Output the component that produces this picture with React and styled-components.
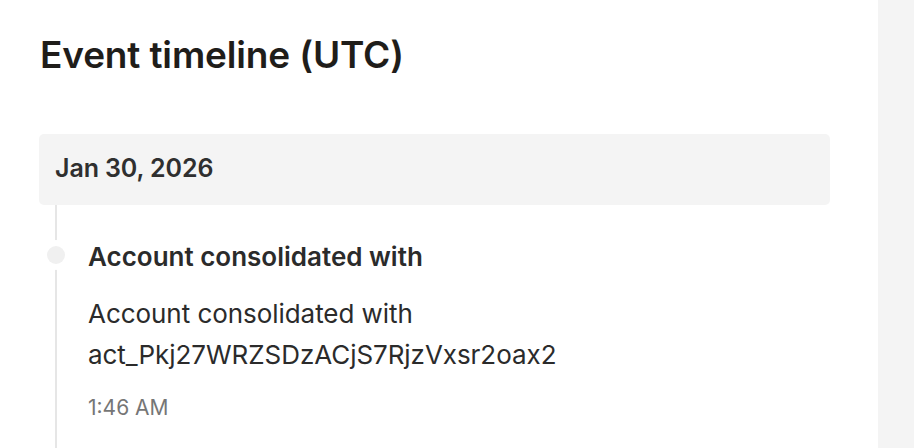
import React from "react";
import styled, { createGlobalStyle } from "styled-components";

const GlobalStyle = createGlobalStyle`
  html, body {
    margin: 0;
    padding: 0;
    background: #ffffff;
  }
  body {
    font-family: Inter, "Liberation Sans", sans-serif;
    color: #1f1d1a;
    -webkit-font-smoothing: antialiased;
  }
`;

const Page = styled.div`
  display: flex;
  width: 914px;
  height: 448px;
  overflow: hidden;
`;

const Main = styled.main`
  flex: 1;
  padding: 28px 48px 0 39px;
`;

const SidePanel = styled.aside`
  width: 36px;
  background: #f4f4f4;
`;

const Heading = styled.h1`
  margin: 0 0 0 1px;
  font-size: 37px;
  line-height: 54px;
  font-weight: 600;
  letter-spacing: -0.15px;
  color: #1f1d1a;
`;

const DateHeader = styled.div`
  margin-top: 52px;
  height: 71px;
  box-sizing: border-box;
  display: flex;
  align-items: center;
  padding: 0 16px 3px;
  background: #f4f4f4;
  border-radius: 5px;
  font-size: 25px;
  font-weight: 600;
  letter-spacing: -0.1px;
  color: #2f2f2f;
`;

const Timeline = styled.div`
  position: relative;
  margin-left: 16px;
  padding: 32px 0 40px 31px;
  border-left: 2px solid #e6e6e6;
`;

const Dot = styled.span`
  position: absolute;
  left: -10px;
  top: 41px;
  width: 18px;
  height: 18px;
  border-radius: 50%;
  background: #f0f0f0;
  box-shadow: 0 0 0 6px #ffffff;
`;

const EventTitle = styled.div`
  font-size: 26px;
  line-height: 40px;
  font-weight: 600;
  color: #2b2b2b;
`;

const EventBody = styled.div`
  margin-top: 16px;
  font-size: 26px;
  line-height: 41px;
  font-weight: 400;
  letter-spacing: -0.05px;
  color: #2b2b2b;
`;

const EventTime = styled.div`
  margin-top: 18px;
  font-size: 21px;
  line-height: 30px;
  color: #767676;
`;

export default function App() {
  return (
    <>
      <GlobalStyle />
      <Page>
        <Main>
          <Heading>Event timeline (UTC)</Heading>
          <DateHeader>Jan 30, 2026</DateHeader>
          <Timeline>
            <Dot />
            <EventTitle>Account consolidated with</EventTitle>
            <EventBody>
              Account consolidated with
              <br />
              act_Pkj27WRZSDzACjS7RjzVxsr2oax2
            </EventBody>
            <EventTime>1:46 AM</EventTime>
          </Timeline>
        </Main>
        <SidePanel />
      </Page>
    </>
  );
}
